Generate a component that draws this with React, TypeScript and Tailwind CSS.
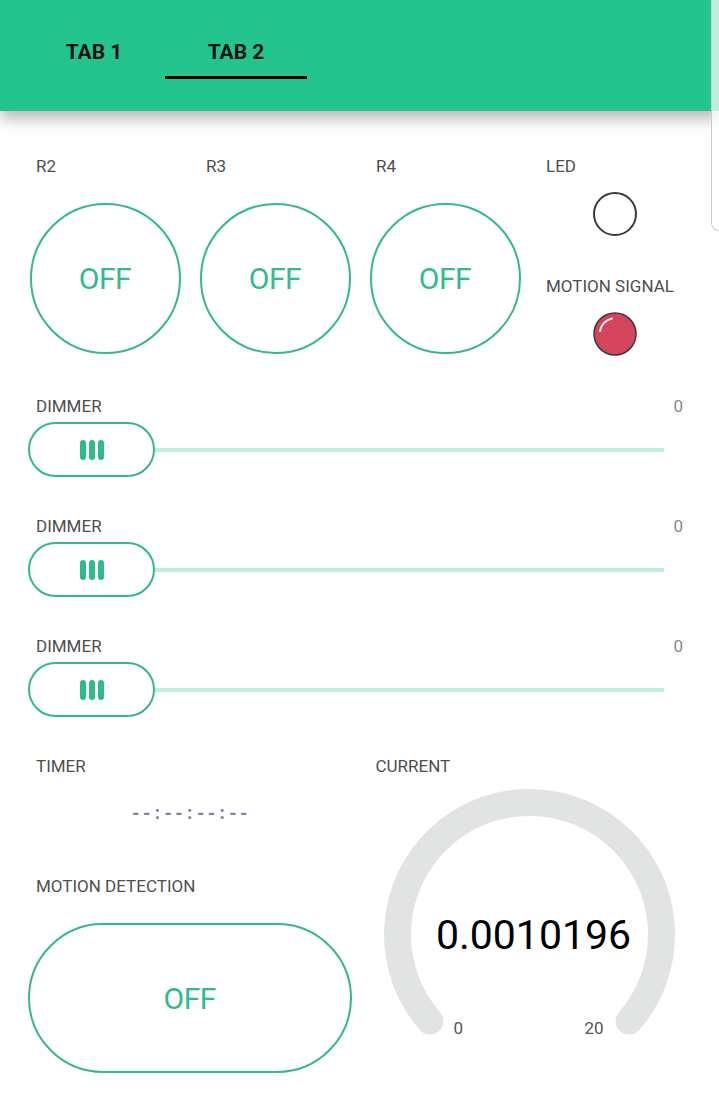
import React from "react";

const green = "#23c48e";

function Label({ children }: { children: React.ReactNode }) {
    return <div className="pl-[16px] text-[17px] leading-[20px] text-[#4f4f4f]">{children}</div>;
}

function RoundButton({ label }: { label: string }) {
    return (
        <div className="flex flex-col">
            <Label>{label}</Label>
            <div className="mt-[27px] mx-auto w-[151px] h-[151px] rounded-full border-2 border-[#33b98b] flex items-center justify-center">
                <span className="text-[30px] text-[#2fbc8c] tracking-[-0.5px]">OFF</span>
            </div>
        </div>
    );
}

function Dimmer({ className = "" }: { className?: string }) {
    return (
        <div className={className}>
            <div className="flex justify-between pl-[16px] pr-[16px] text-[17px] leading-[20px]">
                <span className="text-[#4f4f4f]">DIMMER</span>
                <span className="text-[#8a8a8a]">0</span>
            </div>
            <div className="mt-[6px] flex items-center pl-[8px] pr-[35px]">
                <div className="w-[127px] h-[55px] shrink-0 rounded-full border-2 border-[#33b98b] bg-white flex items-center justify-center gap-[3px]">
                    <span className="w-[6px] h-[20px] rounded-full bg-[#2fbc8c]" />
                    <span className="w-[6px] h-[20px] rounded-full bg-[#2fbc8c]" />
                    <span className="w-[6px] h-[20px] rounded-full bg-[#2fbc8c]" />
                </div>
                <div className="flex-1 h-[4px] bg-[#bdeedb]" />
            </div>
        </div>
    );
}

export default function App() {
    return (
        <div className="relative w-[719px] min-h-[1118px] bg-white overflow-hidden font-['Roboto',sans-serif]">

            {/* panel edge on the right */}
            <div className="absolute top-0 right-0 z-20 w-[8px] h-[231px] bg-white/70 border-l border-b border-[#cccccc] rounded-bl-[8px]" />

            <header className="relative z-10 h-[111px] pt-[40px] pl-[23px] flex shadow-[0_8px_14px_rgba(0,0,0,0.28)]" style={{ backgroundColor: green }}>
                <div className="w-[142px] flex flex-col items-center">
                    <span className="text-[21px] leading-[24px] font-bold text-[#111]">TAB 1</span>
                    <span className="mt-[12px] h-[3px] w-full bg-transparent" />
                </div>
                <div className="w-[142px] flex flex-col items-center">
                    <span className="text-[21px] leading-[24px] font-bold text-[#111]">TAB 2</span>
                    <span className="mt-[12px] h-[3px] w-full bg-black" />
                </div>
            </header>

            <main className="pt-[45px] px-[20px]">
                <div className="grid grid-cols-[170px_170px_170px_170px]">
                    <RoundButton label="R2" />
                    <RoundButton label="R3" />
                    <RoundButton label="R4" />
                    <div className="flex flex-col">
                        <Label>LED</Label>
                        <div className="mt-[16px] mx-auto w-[44px] h-[44px] rounded-full border-2 border-[#363b40]" />
                        <div className="mt-[40px]">
                            <Label>MOTION SIGNAL</Label>
                        </div>
                        <svg className="mt-[16px] mx-auto" width="44" height="44" viewBox="0 0 44 44">
                            <circle cx="22" cy="22" r="21" fill="#d5435d" stroke="#3a3a3a" strokeWidth="1.5" />
                            <path d="M7 19 A15 15 0 0 1 19 6.5" fill="none" stroke="#fff" strokeWidth="2" strokeLinecap="round" opacity="0.9" />
                        </svg>
                    </div>
                </div>

                <Dimmer className="mt-[40px]" />
                <Dimmer className="mt-[39px]" />
                <Dimmer className="mt-[39px]" />

                <div className="mt-[39px] grid grid-cols-2">
                    <div className="flex flex-col">
                        <Label>TIMER</Label>
                        <div className="mt-[28px] text-center font-['Liberation_Mono',monospace] font-bold text-[18px] leading-[20px] text-[#7784a8]">--:--:--:--</div>
                        <div className="mt-[52px]">
                            <Label>MOTION DETECTION</Label>
                        </div>
                        <div className="mt-[27px] mx-[8px] h-[150px] rounded-full border-2 border-[#33b98b] flex items-center justify-center">
                            <span className="text-[30px] text-[#2fbc8c] tracking-[-0.5px]">OFF</span>
                        </div>
                    </div>

                    <div className="flex flex-col">
                        <Label>CURRENT</Label>
                        <div className="relative mt-[13px] ml-[24px] w-[291px] h-[291px]">
                            <svg width="291" height="291" viewBox="0 0 291 291">
                                <path d="M45.9 232.1 A132 132 0 1 1 245.1 232.1" fill="none" stroke="#e2e3e3" strokeWidth="27" strokeLinecap="round" />
                            </svg>
                            <div className="absolute left-0 right-0 top-[121px] flex justify-center pl-[9px]">
                                <span className="text-[41px] leading-[50px] text-black">0.0010196</span>
                            </div>
                            <span className="absolute left-[70px] top-[229px] text-[17px] leading-[20px] text-[#555]">0</span>
                            <span className="absolute left-[201px] top-[229px] text-[17px] leading-[20px] text-[#555]">20</span>
                        </div>
                    </div>
                </div>
            </main>
        </div>
    );
}
